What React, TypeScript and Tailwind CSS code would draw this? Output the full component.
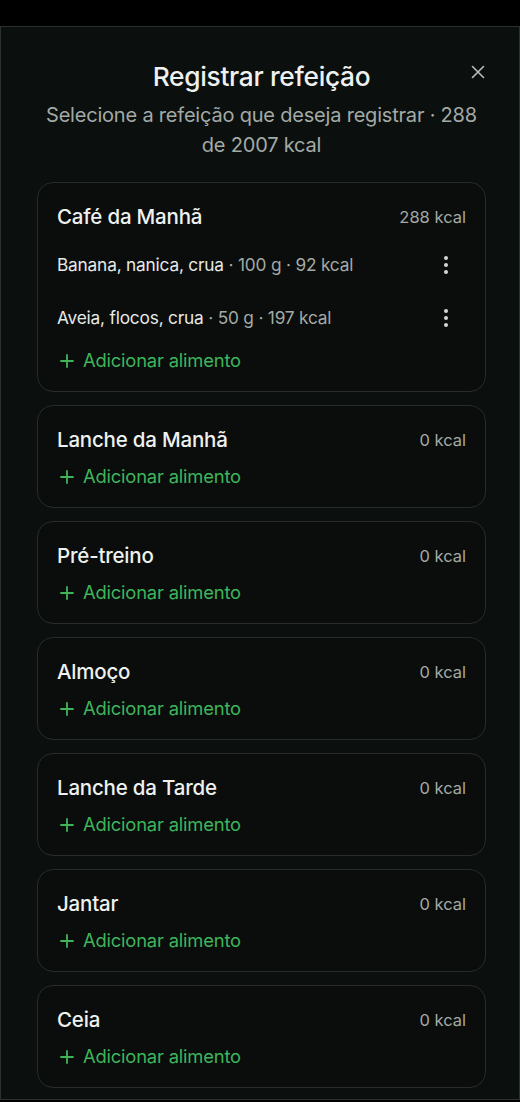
import React from "react";

const meals = [
  { name: "Café da Manhã", kcal: "288 kcal", items: [
    { name: "Banana, nanica, crua", meta: "· 100 g · 92 kcal" },
    { name: "Aveia, flocos, crua", meta: "· 50 g · 197 kcal" },
  ] },
  { name: "Lanche da Manhã", kcal: "0 kcal", items: [] },
  { name: "Pré-treino", kcal: "0 kcal", items: [] },
  { name: "Almoço", kcal: "0 kcal", items: [] },
  { name: "Lanche da Tarde", kcal: "0 kcal", items: [] },
  { name: "Jantar", kcal: "0 kcal", items: [] },
  { name: "Ceia", kcal: "0 kcal", items: [] },
];

function Plus() {
  return (
    <svg width="16" height="16" viewBox="0 0 16 16" fill="none" stroke="#3fb45a" strokeWidth="1.8" strokeLinecap="round">
      <path d="M8 2v12M2 8h12" />
    </svg>
  );
}

function Dots() {
  return (
    <svg width="6" height="20" viewBox="0 0 6 20" fill="#d4d7d5">
      <circle cx="3" cy="3" r="2" />
      <circle cx="3" cy="10" r="2" />
      <circle cx="3" cy="17" r="2" />
    </svg>
  );
}

export default function App() {
  return (
    <div className="min-h-screen bg-black pt-[26px]" style={{ fontFamily: "Inter, 'Noto Sans', sans-serif" }}>
      <div className="h-[1074px] border-t border-l border-r border-b border-[#2b312e] bg-[#0b0f0d] pl-[36px] pr-[33px] pt-[34px]">
        <div className="relative flex flex-col items-center">
          <h1 className="text-[26.3px] leading-[32px] font-medium text-[#eef1ef] tracking-[-0.3px]">Registrar refeição</h1>
          <button className="absolute right-[-1px] top-[2px] text-[#b9bebb]">
            <svg width="18" height="18" viewBox="0 0 18 18" fill="none" stroke="currentColor" strokeWidth="1.6" strokeLinecap="round">
              <path d="M3.5 3.5l11 11M14.5 3.5l-11 11" />
            </svg>
          </button>
          <p className="mt-[7px] text-center text-[20px] leading-[30px] text-[#a3aaa6] tracking-[-0.2px]">
            Selecione a refeição que deseja registrar · 288 de 2007 kcal
          </p>
        </div>
        <div className="mt-[22px] flex flex-col gap-[13px]">
          {meals.map((m) => (
            <div key={m.name} className="rounded-[16px] border border-[#262d29] bg-[#0a0d0b] px-[19px] pt-[20px] pb-[18px]">
              <div className="flex items-center justify-between h-[28px]">
                <span className="text-[20.5px] font-medium text-[#eef1ef] tracking-[-0.2px]">{m.name}</span>
                <span className="text-[16.5px] text-[#a3aaa6]">{m.kcal}</span>
              </div>
              {m.items.length > 0 && (
                <div className="mt-[7px] flex flex-col">
                  {m.items.map((it) => (
                    <div key={it.name} className="flex items-center justify-between h-[53px]">
                      <span className="text-[17.3px] text-[#e6e9e7] tracking-[-0.2px]">
                        {it.name} <span className="text-[#a3aaa6]">{it.meta}</span>
                      </span>
                      <span className="mr-[17px] flex items-center"><Dots /></span>
                    </div>
                  ))}
                </div>
              )}
              <button className={`${m.items.length > 0 ? "mt-[5px]" : "mt-[11px]"} flex items-center gap-[8px] h-[24px] pl-[2px]`}>
                <Plus />
                <span className="text-[18.4px] text-[#3fb45a] tracking-[-0.2px]">Adicionar alimento</span>
              </button>
            </div>
          ))}
        </div>
      </div>
    </div>
  );
}
